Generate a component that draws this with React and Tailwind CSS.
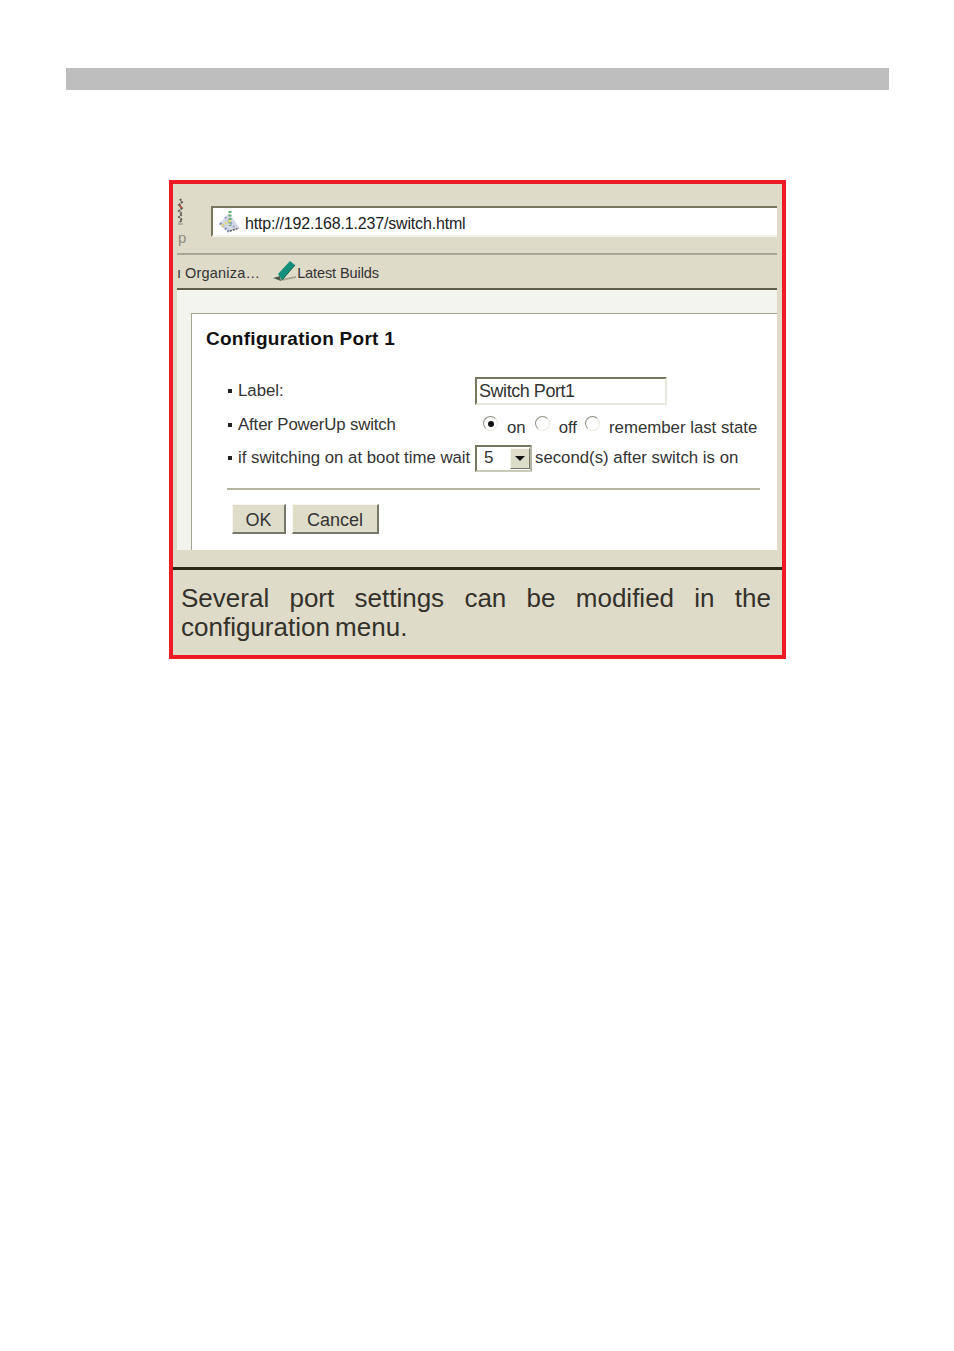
import React from "react";

const sans = "font-['Liberation_Sans',Arial,sans-serif]";

function Bullet() {
  return <span className="w-[4px] h-[4px] bg-[#222] ml-[1px] mr-[6px] shrink-0" />;
}

function Radio({ checked }) {
  return (
    <span className="w-[15px] h-[15px] mb-[2px] rounded-full border border-[#8f8f80] border-b-[#e8e8dc] border-r-[#e8e8dc] bg-white flex items-center justify-center shrink-0">
      {checked && <span className="w-[6px] h-[6px] rounded-full bg-[#111]" />}
    </span>
  );
}

function GreyButton({ children, width }) {
  return (
    <button className={`h-[30px] pt-[4px] ${width} bg-[#deddca] border border-[#f7f7f0] border-r-2 border-b-2 border-r-[#77776a] border-b-[#77776a] text-[18px] text-[#333] flex items-center justify-center`}>
      {children}
    </button>
  );
}

function GripIcon() {
  return (
    <svg width="8" height="28" viewBox="0 0 8 28" className="shrink-0">
      <path d="M3 1 L5 4 L2 7 L5 10 L2 13 L5 16 L2 19 L5 22 L2 25" fill="none" stroke="#5c5c55" strokeWidth="2" strokeDasharray="2 1" />
      <path d="M2 7 L5 10" stroke="#c8503c" strokeWidth="1.5" />
      <path d="M1 26 L6 26" stroke="#a9a794" strokeWidth="1.5" />
    </svg>
  );
}

function GlobeIcon() {
  return (
    <svg width="22" height="23" viewBox="0 0 22 23" className="shrink-0">
      <path d="M1 14 L11 3 L21 17 L11 22 Z" fill="#d5d8e8" />
      <path d="M12 1 L12 16" stroke="#63b06d" strokeWidth="3" strokeDasharray="2 1.5" />
      <path d="M2 13 L11 22" stroke="#8a8fb8" strokeWidth="2.5" strokeDasharray="2 1.5" />
      <path d="M7 7 L18 19" stroke="#9da2c4" strokeWidth="2" strokeDasharray="2 2" />
      <path d="M4 16 L13 10" stroke="#e2d96a" strokeWidth="3" strokeDasharray="2 2" />
      <path d="M12 21 L21 18" stroke="#555" strokeWidth="1.5" strokeDasharray="2 1" />
    </svg>
  );
}

function BookmarkIcon() {
  return (
    <svg width="24" height="22" viewBox="0 0 24 22" className="shrink-0">
      <path d="M8 19 L23 16" stroke="#a9a794" strokeWidth="2" />
      <path d="M0 17 L7 15 L8 20 Z" fill="#4d5a48" />
      <path d="M5 13 L17 0 L22 4 L9 19 Z" fill="#14907a" />
      <path d="M9 19 L22 4" stroke="#0c5f50" strokeWidth="1" />
    </svg>
  );
}

export default function App() {
  return (
    <div className={`w-[954px] h-[1351px] bg-white pt-[68px] px-[66px] overflow-hidden ${sans}`}>
      <div className="w-[823px] h-[22px] bg-[#bebebe]" />

      <div className="w-[617px] h-[479px] mt-[90px] ml-[103px] border-[4px] border-[#ed1c24] bg-[#dedbc9] flex flex-col">
        {/* address bar */}
        <div className="h-[71px] ml-[4px] mr-[5px] border-b-2 border-[#a8a797] flex shrink-0">
          <div className="w-[34px] pt-[14px] flex flex-col shrink-0">
            <GripIcon />
            <span className="text-[15px] leading-[15px] text-[#8d8c7e] mt-[4px] ml-[1px]">p</span>
          </div>
          <div className="mt-[22px] h-[31px] flex-1 bg-white border-2 border-[#77775f] border-r-0 border-b-[#f4f4ea] flex items-center pl-[5px] gap-[5px]">
            <GlobeIcon />
            <span className="text-[16px] pt-[4px] text-[#222] tracking-[-0.17px]">http://192.168.1.237/switch.html</span>
          </div>
        </div>

        {/* bookmarks */}
        <div className="h-[35px] pt-[5px] ml-[4px] mr-[5px] border-b-2 border-[#5c5c49] flex items-center text-[14.5px] text-[#333] shrink-0">
          <span className="w-[4px] mr-[4px]">ı</span>
          <span className="tracking-[0.2px]">Organiza…</span>
          <span className="ml-[13px] mb-[4px]"><BookmarkIcon /></span>
          <span className="tracking-[-0.1px]">Latest Builds</span>
        </div>

        {/* page */}
        <div className="h-[260px] ml-[4px] mr-[5px] bg-[#f4f4ee] pt-[23px] pl-[14px] shrink-0">
          <div className="h-[237px] bg-white border-l border-t border-[#a5a594] pl-[14px] pr-[17px] pt-[14px]">
            <h1 className="text-[19px] leading-[22px] font-bold text-[#111] tracking-[0.27px]">Configuration Port 1</h1>

            <div className="mt-[27px] pl-[21px] text-[16.8px] text-[#333]">
              <div className="h-[28px] flex items-center">
                <div className="w-[248px] flex items-center"><Bullet /><span>Label:</span></div>
                <div className="w-[192px] h-[28px] border-2 border-[#77775f] border-r-[#e8e8dc] border-b-[#e8e8dc] text-[18px] flex items-center pl-[2px] tracking-[-0.45px]">Switch Port1</div>
              </div>

              <div className="h-[39px] flex items-center">
                <div className="w-[256px] flex items-center"><Bullet /><span className="tracking-[-0.13px]">After PowerUp switch</span></div>
                <Radio checked />
                <span className="ml-[9px] mt-[6px]">on</span>
                <span className="ml-[9px]"><Radio /></span>
                <span className="ml-[9px] mt-[6px]">off</span>
                <span className="ml-[8px]"><Radio /></span>
                <span className="ml-[9px] mt-[6px] whitespace-nowrap">remember last state</span>
              </div>

              <div className="h-[28px] flex items-center">
                <div className="w-[248px] flex items-center"><Bullet /><span className="whitespace-nowrap">if switching on at boot time wait</span></div>
                <div className="w-[57px] h-[27px] border-2 border-[#77775f] border-r-[#b5b5a5] border-b-[#c9c9b8] flex items-center justify-between text-[17px] shrink-0">
                  <span className="ml-[7px]">5</span>
                  <span className="w-[20px] h-[21px] bg-[#deddca] border border-[#f7f7f0] border-r-[#77776a] border-b-[#77776a] flex items-center justify-center">
                    <span className="w-0 h-0 border-x-[5px] border-x-transparent border-t-[5px] border-t-[#111]" />
                  </span>
                </div>
                <span className="ml-[3px] whitespace-nowrap">second(s) after switch is on</span>
              </div>

              <div className="mt-[16px] w-[533px] h-[2px] bg-[#b5b4a3]" />

              <div className="mt-[14px] ml-[5px] flex gap-[6px]">
                <GreyButton width="w-[54px]">OK</GreyButton>
                <GreyButton width="w-[87px]">Cancel</GreyButton>
              </div>
            </div>
          </div>
        </div>

        {/* caption */}
        <div className="mt-[17px] h-[3px] bg-[#2b2a18] shrink-0" />
        <p className="pl-[8px] pr-[11px] pt-[14px] text-[26px] leading-[29px] text-[#33322a] text-justify">
          Several port settings can be modified in the <span className="[word-spacing:-2px]">configuration menu.</span>
        </p>
      </div>
    </div>
  );
}
